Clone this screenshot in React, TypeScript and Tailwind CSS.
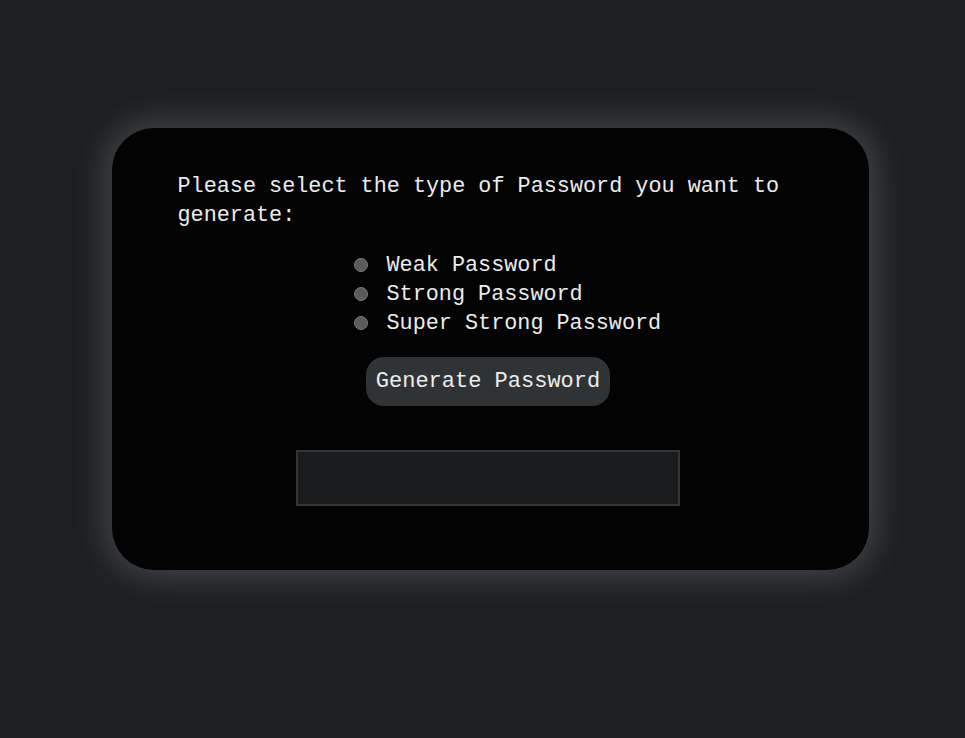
export default function App() {
  const options = ["Weak Password", "Strong Password", "Super Strong Password"];

  return (
    <div
      className="min-h-screen w-full bg-[#1e1f21] pt-[128px] flex flex-col items-center"
      style={{ fontFamily: '"Liberation Mono", "DejaVu Sans Mono", monospace' }}
    >
      <div className="w-[757px] h-[442px] ml-[15px] bg-[#030303] rounded-[42px] shadow-[0_0_32px_6px_rgba(105,112,120,0.5)] pt-[44px] px-[66px] flex flex-col text-[#ececec]">
        <p className="text-[21.8px] leading-[29px]">
          Please select the type of Password you want to generate:
        </p>

        <div className="mt-[22px] ml-[176px] flex flex-col">
          {options.map((opt) => (
            <label key={opt} className="flex items-center h-[29px] text-[21.8px]">
              <span className="w-[14px] h-[14px] rounded-full bg-[#5b5b5b] border border-[#7a7a7a] mr-[19px] -mt-[4px]" />
              {opt}
            </label>
          ))}
        </div>

        <div className="mt-[18px] -ml-[4px] flex justify-center">
          <button className="h-[49px] px-[10px] rounded-[18px] bg-[#303336] text-[22px] text-[#ececec]">
            Generate Password
          </button>
        </div>

        <div className="mt-[44px] -ml-[4px] flex justify-center">
          <div className="w-[384px] h-[56px] bg-[#1a1b1d] border-2 border-[#333436]" />
        </div>
      </div>
    </div>
  );
}
